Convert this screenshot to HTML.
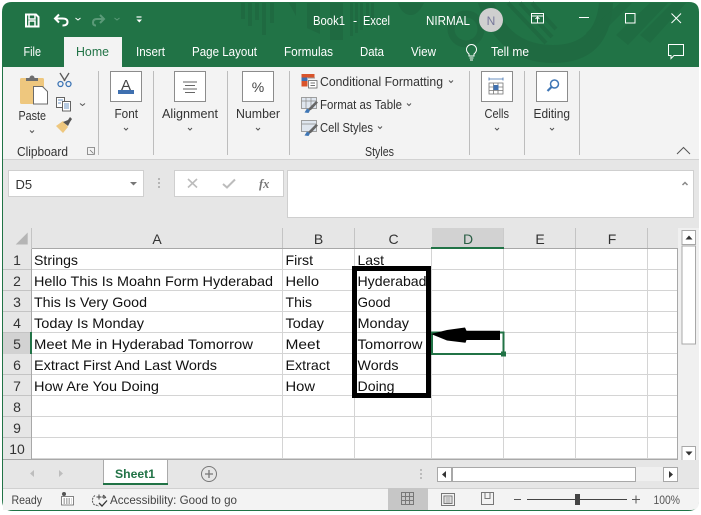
<!DOCTYPE html>
<html><head><meta charset="utf-8"><style>
html,body{margin:0;padding:0;background:#fff;width:701px;height:515px;overflow:hidden}
svg{display:block}
text{font-family:"Liberation Sans",sans-serif;white-space:pre}
.c{font-size:14px;fill:#111}
.r{font-size:12.5px;fill:#333}
.t{font-size:12.5px;fill:#fff}
.h{font-size:14px;fill:#333;text-anchor:middle}
</style></head><body>
<svg width="701" height="515" viewBox="0 0 701 515" xmlns="http://www.w3.org/2000/svg">
<rect width="701" height="515" fill="#fff"/>
<path d="M2 12Q2 2 12 2H689Q699 2 699 12V500Q699 511 688 511H13Q2 511 2 500Z" fill="#217346"/>
<!-- title pattern -->
<g fill="#1f6a41">
<rect x="241" y="3" width="4" height="16"/><rect x="248" y="3" width="4" height="23"/><rect x="255" y="3" width="4" height="17"/><rect x="262" y="3" width="4" height="32"/><rect x="270" y="3" width="4" height="20"/>
<path d="M289 3H296V16Z"/><path d="M307 3H320V34L307 28Z"/><path d="M330 3H343V40H330Z"/>
<rect x="350" y="3" width="3" height="33"/><rect x="355" y="3" width="3" height="30"/><rect x="360" y="3" width="3" height="27"/><rect x="366" y="3" width="3" height="24"/><rect x="371" y="3" width="3" height="21"/>
<path d="M398 3H424Q418 15 411 15Q402 15 398 3Z"/>
<path d="M478 3L494 3Q510 45 553 45Q595 45 599 3L613 3Q610 63 553 63Q498 63 478 3Z"/>
<path d="M620 3h12l-38 38-8-8ZM650 3h18l-40 42-12-10ZM672 3h14l-36 40-10-8Z" opacity=".8"/>
</g>
<circle cx="466" cy="29" r="15" fill="none" stroke="#1f6a41" stroke-width="7"/>
<g stroke="#1f6a41" stroke-width="4" fill="none"><path d="M508 3l38 40M520 3l32 34M532 3l24 26"/></g>
<!-- QAT -->
<g fill="none" stroke="#fff" stroke-width="2">
<path d="M26 14.500H36L38.500 17V26.500H26Z"/><path d="M29 15v4h6v-4M29 26v-5h6v5" stroke-width="1.500"/>
<path d="M59 14.500L55 18.500L59 22.500M55 18.500H62.500Q67.500 18.500 67.500 22Q67.500 25.500 62.500 25.500" stroke-width="2"/>
<path d="M75.500 18l2.500 2 2.500-2" stroke-width="1"/>
<path d="M100 15L104 19L100 23M104 19H97Q93 19 93 22.500Q93 25.500 96 25.500" stroke="#5b9a78" stroke-width="2"/>
<path d="M114.500 18l2.500 2 2.500-2" stroke="#5b9a78" stroke-width="1"/>
<path d="M136.500 17h5" stroke-width="1.200"/>
</g>
<path d="M136.500 19.500h5.500l-2.700 3z" fill="#fff"/>
<!-- title text -->
<text x="313" y="25" class="t" textLength="32" lengthAdjust="spacingAndGlyphs">Book1</text>
<text x="353" y="25" class="t">-</text>
<text x="363" y="25" class="t" textLength="27" lengthAdjust="spacingAndGlyphs">Excel</text>
<text x="426" y="25" class="t" textLength="44" lengthAdjust="spacingAndGlyphs">NIRMAL</text>
<circle cx="491" cy="20" r="12" fill="#cfcfcf"/>
<text x="491" y="25" font-size="12" fill="#77779a" text-anchor="middle">N</text>
<!-- window buttons -->
<g fill="none" stroke="#fff" stroke-width="1">
<rect x="531.500" y="13.500" width="12" height="9.500"/><path d="M531.500 16h12M537.500 23v-5.500M535.500 19l2-2 2 2"/>
<path d="M579 17.500h10"/><rect x="625.500" y="13.500" width="9.500" height="9.500"/><path d="M671.500 13.500l9.500 9.500M681 13.500l-9.500 9.500"/>
</g>
<!-- tabs -->
<rect x="64" y="37" width="58" height="31" fill="#f3f3f3"/>
<text x="23.500" y="56" class="t" textLength="17.500" lengthAdjust="spacingAndGlyphs">File</text>
<text x="76" y="56" style="font-size:12.500px;fill:#217346" textLength="33" lengthAdjust="spacingAndGlyphs">Home</text>
<text x="136" y="56" class="t" textLength="29" lengthAdjust="spacingAndGlyphs">Insert</text>
<text x="192" y="56" class="t" textLength="65" lengthAdjust="spacingAndGlyphs">Page Layout</text>
<text x="284" y="56" class="t" textLength="49" lengthAdjust="spacingAndGlyphs">Formulas</text>
<text x="360" y="56" class="t" textLength="24" lengthAdjust="spacingAndGlyphs">Data</text>
<text x="411" y="56" class="t" textLength="25" lengthAdjust="spacingAndGlyphs">View</text>
<text x="491" y="56" class="t" textLength="38" lengthAdjust="spacingAndGlyphs">Tell me</text>
<g fill="none" stroke="#fff" stroke-width="1"><path d="M469 56V54Q466.500 52 466.500 49.500A5 5 0 0 1 476.500 49.500Q476.500 52 474 54V56ZM469.500 58h4M470 60h3"/>
<path d="M668.500 44.500h15v11h-9.500l-3 3v-3h-2.500Z"/></g>
<!-- ribbon -->
<rect x="3" y="67" width="696" height="92" fill="#f3f3f3"/>
<rect x="3" y="159" width="696" height="1.500" fill="#d2d2d2"/>
<rect x="3" y="160" width="696" height="68" fill="#e6e6e6"/>
<g fill="#bdbdbd"><rect x="98" y="71" width="1" height="84"/><rect x="153" y="71" width="1" height="84"/><rect x="227" y="71" width="1" height="84"/><rect x="289" y="71" width="1" height="84"/><rect x="469" y="71" width="1" height="84"/><rect x="524" y="71" width="1" height="84"/><rect x="579" y="71" width="1" height="84"/></g>
<!-- paste -->
<rect x="20" y="78" width="24" height="26" rx="1.500" fill="#eec77e"/>
<path d="M26 81v-3h3.500a2.500 2.500 0 0 1 5 0H38v3Z" fill="#6e6e6e"/>
<path d="M33.500 86.500h9l5 5v12.500h-14Z" fill="#fff" stroke="#6b6b6b" stroke-width="1"/>
<g fill="none" stroke="#5a5a5a" stroke-width="1.300"><path d="M60 73l5 8M69 73l-5 8"/></g>
<g fill="none" stroke="#3f76b5" stroke-width="1.300"><circle cx="60.500" cy="84" r="2.500"/><circle cx="68.500" cy="84" r="2.500"/></g>
<g fill="#fff" stroke="#555" stroke-width=".9"><rect x="56.500" y="97.500" width="8" height="10"/><rect x="62.500" y="101.500" width="8" height="9.500"/></g>
<path d="M58 100h5M58 103h3M64 104h5M64 106h5M64 108h5" stroke="#3f76b5" stroke-width=".8"/>
<path d="M56 126l7-5 5 6-5 6Z" fill="#eec77e"/><path d="M63 122l5-2 2-3 2 2-2 3-2 4Z" fill="#555"/>
<text x="18.500" y="120" class="r" textLength="27.500" lengthAdjust="spacingAndGlyphs">Paste</text>
<text x="17" y="156" class="r" textLength="51" lengthAdjust="spacingAndGlyphs">Clipboard</text>
<path d="M87.500 147.500h7v7M87.500 147.500v7h7M90 150l3.500 3.500" fill="none" stroke="#777" stroke-width=".8"/>
<!-- chevrons -->
<g fill="none" stroke="#555" stroke-width="1">
<path d="M30 130.500l2 2 2-2M80 103.500l2.500 2 2.500-2M124 128l2 2 2-2M188 128l2 2 2-2M256 128l2 2 2-2M495 128l2 2 2-2M550 128l2 2 2-2M449 80.500l2 2 2-2M407 103.500l2 2 2-2M378 126.500l2 2 2-2"/>
<path d="M677 154l6.500-6.500 6.500 6.500"/>
</g>
<!-- boxes -->
<g fill="#fff" stroke="#8c8c8c" stroke-width="1"><rect x="110.500" y="71.500" width="31" height="30"/><rect x="174.500" y="71.500" width="31" height="30"/><rect x="242.500" y="71.500" width="31" height="30"/><rect x="481.500" y="71.500" width="31" height="30"/><rect x="536.500" y="71.500" width="31" height="30"/></g>
<text x="126" y="90" font-size="15" fill="#444" text-anchor="middle">A</text>
<rect x="118" y="90" width="16" height="4" fill="#3f70b0"/>
<path d="M183 82h14M185 85.500h10M183 89h14M185 92.500h10" stroke="#666" stroke-width="1"/>
<text x="258" y="92" font-size="14" fill="#444" text-anchor="middle">%</text>
<g fill="none" stroke="#777" stroke-width=".8"><rect x="489" y="83" width="14" height="11"/><path d="M489 87h14M489 90.500h14M493.500 83v11M498 83v11"/><path d="M489 79h14M489 77.500v3M503 77.500v3" stroke="#3f70b0"/></g>
<rect x="493.500" y="85" width="5" height="5" fill="#3f70b0"/>
<circle cx="554.500" cy="84" r="4" fill="#fff" stroke="#3f76b5" stroke-width="1.500"/><path d="M551.500 87l-4 4" stroke="#3f76b5" stroke-width="2.200"/>
<text x="114.500" y="118" class="r" textLength="23.500" lengthAdjust="spacingAndGlyphs">Font</text>
<text x="162" y="118" class="r" textLength="56" lengthAdjust="spacingAndGlyphs">Alignment</text>
<text x="236" y="118" class="r" textLength="44" lengthAdjust="spacingAndGlyphs">Number</text>
<text x="484.500" y="118" class="r" textLength="24.500" lengthAdjust="spacingAndGlyphs">Cells</text>
<text x="533.500" y="118" class="r" textLength="36.500" lengthAdjust="spacingAndGlyphs">Editing</text>
<text x="320" y="86" class="r" textLength="123" lengthAdjust="spacingAndGlyphs">Conditional Formatting</text>
<text x="320" y="109" class="r" textLength="82" lengthAdjust="spacingAndGlyphs">Format as Table</text>
<text x="320" y="132" class="r" textLength="53" lengthAdjust="spacingAndGlyphs">Cell Styles</text>
<text x="365" y="156" class="r" textLength="29" lengthAdjust="spacingAndGlyphs">Styles</text>
<!-- style icons -->
<rect x="301.500" y="74" width="13" height="3.500" fill="#d9542b"/><rect x="301.500" y="77.500" width="6" height="3.500" fill="#3f70b0"/><rect x="301.500" y="81" width="6" height="5.500" fill="#d9542b"/>
<path d="M308 78h7M308 81h3" stroke="#999" stroke-width="1"/>
<rect x="308.500" y="80.500" width="8.500" height="7.500" fill="#fff" stroke="#666" stroke-width=".8"/><path d="M310.500 83h4.500M310.500 85.500h4.500" stroke="#444" stroke-width=".8"/>
<g fill="#dfe6ef" stroke="#8a8a8a" stroke-width=".8"><rect x="301.500" y="97.500" width="15" height="11"/><rect x="301.500" y="120.500" width="15" height="11"/></g>
<path d="M301.500 101h15M306 97.500v11M311 97.500v11M301.500 124h15" stroke="#8a8a8a" stroke-width=".7"/>
<path d="M307 111l2-3 7-7 2 1.500-7 7.500ZM307 134l2-3 7-7 2 1.500-7 7.500Z" fill="#666"/><path d="M304.500 112.500l2.500-4 3 2-1.500 2.500ZM304.500 135.500l2.500-4 3 2-1.500 2.500Z" fill="#3f76b5"/>
<!-- formula bar -->
<rect x="8.500" y="170.500" width="135" height="26" fill="#fff" stroke="#cfcfcf"/>
<text x="15.500" y="189" font-size="13" fill="#333">D5</text>
<path d="M130 182h7l-3.500 3.500Z" fill="#777"/>
<g fill="#b5b5b5"><rect x="158" y="178" width="2" height="2"/><rect x="158" y="182" width="2" height="2"/><rect x="158" y="186" width="2" height="2"/></g>
<rect x="174.500" y="170.500" width="109" height="26" fill="#fff" stroke="#cfcfcf"/>
<path d="M188 179l9 8.500M197 179l-9 8.500" stroke="#bcbcbc" stroke-width="1.600" fill="none"/>
<path d="M223 184l4 3.500 8-8" stroke="#bcbcbc" stroke-width="2" fill="none"/>
<text x="259" y="188" font-size="12.500" font-style="italic" font-weight="bold" fill="#777" style="font-family:'Liberation Serif',serif">fx</text>
<rect x="287.500" y="170.500" width="406" height="47" fill="#fff" stroke="#cfcfcf"/>
<path d="M682.500 185l2.500-2.500 2.500 2.500" stroke="#888" stroke-width="1.500" fill="none"/>
<!-- grid -->
<rect x="3" y="228" width="696" height="232" fill="#e6e6e6"/>
<rect x="32" y="249" width="645" height="211" fill="#fff"/>
<g stroke="#d4d4d4" stroke-width="1">
<path d="M32 269.500H677M32 290.500H677M32 311.500H677M32 332.500H677M32 353.500H677M32 374.500H677M32 395.500H677M32 416.500H677M32 437.500H677M32 458.500H677"/>
<path d="M282.500 249V460M354.500 249V460M431.500 249V460M503.500 249V460M575.500 249V460M647.500 249V460"/>
</g>
<path d="M677.500 248.500V460M31.500 248.500V460M32 248.500H432M504 248.500H678M3 459.500H678" stroke="#a8a8a8" stroke-width="1" fill="none"/>
<g stroke="#c4c4c4" stroke-width="1"><path d="M3 269.500H31M3 290.500H31M3 311.500H31M3 332.500H31M3 353.500H31M3 374.500H31M3 395.500H31M3 416.500H31M3 437.500H31"/><path d="M31.500 228V248M282.500 228V248M354.500 228V248M503.500 228V248M575.500 228V248M647.500 228V248"/></g>
<rect x="432" y="228" width="71.500" height="19" fill="#d2d2d2"/><rect x="431" y="247" width="73" height="2" fill="#217346"/>
<rect x="3" y="333" width="28" height="21" fill="#d2d2d2"/><rect x="30" y="332" width="2" height="22" fill="#217346"/>
<path d="M15.700 244.500H27.700V232.500Z" fill="#b5b5b5"/>
<text x="157" y="244" class="h">A</text><text x="318.500" y="244" class="h">B</text><text x="393.500" y="244" class="h">C</text><text x="468" y="244" class="h" style="fill:#2a5f45">D</text><text x="540" y="244" class="h">E</text><text x="612" y="244" class="h">F</text>
<text x="17" y="265" class="h">1</text><text x="17" y="286" class="h">2</text><text x="17" y="307" class="h">3</text><text x="17" y="328" class="h">4</text><text x="17" y="349" class="h">5</text><text x="17" y="370" class="h">6</text><text x="17" y="391" class="h">7</text><text x="17" y="412" class="h">8</text><text x="17" y="433" class="h">9</text><text x="17" y="454" class="h">10</text>
<!-- cells -->
<text x="34" y="265" class="c" textLength="44" lengthAdjust="spacingAndGlyphs">Strings</text>
<text x="34" y="286" class="c" textLength="239" lengthAdjust="spacingAndGlyphs">Hello This Is Moahn Form Hyderabad</text>
<text x="34" y="307" class="c" textLength="113" lengthAdjust="spacingAndGlyphs">This Is Very Good</text>
<text x="34" y="328" class="c" textLength="110" lengthAdjust="spacingAndGlyphs">Today Is Monday</text>
<text x="34" y="349" class="c" textLength="219" lengthAdjust="spacingAndGlyphs">Meet Me in Hyderabad Tomorrow</text>
<text x="34" y="370" class="c" textLength="183" lengthAdjust="spacingAndGlyphs">Extract First And Last Words</text>
<text x="34" y="391" class="c" textLength="125" lengthAdjust="spacingAndGlyphs">How Are You Doing</text>
<text x="285.500" y="265" class="c" textLength="27.500" lengthAdjust="spacingAndGlyphs">First</text>
<text x="285.500" y="286" class="c" textLength="33.500" lengthAdjust="spacingAndGlyphs">Hello</text>
<text x="285.500" y="307" class="c" textLength="26.500" lengthAdjust="spacingAndGlyphs">This</text>
<text x="285.500" y="328" class="c" textLength="38.500" lengthAdjust="spacingAndGlyphs">Today</text>
<text x="285.500" y="349" class="c" textLength="34.500" lengthAdjust="spacingAndGlyphs">Meet</text>
<text x="285.500" y="370" class="c" textLength="44.500" lengthAdjust="spacingAndGlyphs">Extract</text>
<text x="285.500" y="391" class="c" textLength="29.500" lengthAdjust="spacingAndGlyphs">How</text>
<text x="357.500" y="265" class="c" textLength="26.500" lengthAdjust="spacingAndGlyphs">Last</text>
<text x="357.500" y="286" class="c" textLength="69" lengthAdjust="spacingAndGlyphs">Hyderabad</text>
<text x="357.500" y="307" class="c" textLength="33" lengthAdjust="spacingAndGlyphs">Good</text>
<text x="357.500" y="328" class="c" textLength="51.500" lengthAdjust="spacingAndGlyphs">Monday</text>
<text x="357.500" y="349" class="c" textLength="65" lengthAdjust="spacingAndGlyphs">Tomorrow</text>
<text x="357.500" y="370" class="c" textLength="41" lengthAdjust="spacingAndGlyphs">Words</text>
<text x="357.500" y="391" class="c" textLength="37" lengthAdjust="spacingAndGlyphs">Doing</text>
<!-- selection -->
<rect x="432" y="332.500" width="71.500" height="21.500" fill="none" stroke="#217346" stroke-width="2"/>
<rect x="501" y="351.500" width="5" height="5" fill="#217346"/>
<!-- annotations -->
<rect x="354.500" y="268.500" width="74" height="127" fill="none" stroke="#000" stroke-width="5"/>
<path d="M431 334L447 330L465 327.500L466.500 330.700H500V340H466.500L465.500 342.700L447 340.500Z" fill="#000"/>
<!-- scrollbar -->
<rect x="678" y="228" width="21" height="232" fill="#f0f0f0"/>
<rect x="682" y="230.500" width="13.500" height="14" fill="#fff" stroke="#a8a8a8"/>
<rect x="682" y="246" width="13.500" height="98" fill="#fff" stroke="#a8a8a8"/>
<rect x="682" y="446.500" width="13.500" height="14" fill="#fff" stroke="#a8a8a8"/>
<path d="M685.500 239.500h7l-3.500-4Z" fill="#333"/><path d="M685.500 451.500h7l-3.500 4Z" fill="#333"/>
<!-- sheet tabs -->
<rect x="3" y="460" width="696" height="28" fill="#e6e6e6"/>
<path d="M34 470v7l-4-3.500ZM59 470v7l4-3.500Z" fill="#bdbdbd"/>
<rect x="103" y="460" width="64" height="24" fill="#fff"/><path d="M103.500 460v24M167.500 460v24" stroke="#aaa"/>
<rect x="103" y="483" width="65" height="2" fill="#217346"/>
<text x="115" y="478" font-size="12" font-weight="bold" fill="#217346" textLength="40" lengthAdjust="spacingAndGlyphs">Sheet1</text>
<circle cx="209" cy="474" r="7.500" fill="none" stroke="#777" stroke-width="1"/><path d="M205 474h8M209 470v8" stroke="#777" stroke-width="1.300"/>
<g fill="#bcbcbc"><rect x="420" y="469" width="2" height="2"/><rect x="420" y="473" width="2" height="2"/><rect x="420" y="477" width="2" height="2"/></g>
<rect x="452" y="467" width="211" height="14" fill="#f0f0f0"/>
<rect x="437.500" y="467.500" width="14" height="14" fill="#fff" stroke="#a8a8a8"/>
<rect x="452.500" y="467.500" width="183" height="14" fill="#fff" stroke="#a8a8a8"/>
<rect x="663.500" y="467.500" width="14" height="14" fill="#fff" stroke="#a8a8a8"/>
<path d="M446 471v7l-4-3.500ZM669 471v7l4-3.500Z" fill="#333"/>
<!-- status bar -->
<path d="M3 488H699V502Q699 510 691 510H3Z" fill="#f3f3f3"/>
<rect x="3" y="488" width="696" height="1" fill="#d0d0d0"/>
<text x="11.500" y="504" font-size="12" fill="#444" textLength="30.500" lengthAdjust="spacingAndGlyphs">Ready</text>
<rect x="61.500" y="496.500" width="12" height="8.500" fill="#fff" stroke="#666" stroke-width=".8"/><circle cx="64" cy="494" r="2" fill="#555"/><path d="M63.500 499h8M63.500 501h8M63.500 503h8" stroke="#666" stroke-width=".9" stroke-dasharray="1.500 1"/>
<path d="M95 495.500a6 6 0 0 0-1 9l5 1.500M103 495l3 3" fill="none" stroke="#555" stroke-width="1" stroke-dasharray="2 1"/><path d="M99 494.500v5M96.500 497h5M104 495v4M102 497h4" stroke="#444" stroke-width="1"/><path d="M99 503l3 3 5-5.500" fill="none" stroke="#333" stroke-width="1.300"/>
<text x="110" y="504" font-size="12" fill="#444" textLength="127" lengthAdjust="spacingAndGlyphs">Accessibility: Good to go</text>
<rect x="388" y="488" width="40" height="22" fill="#c6c6c6"/>
<g fill="none" stroke="#777" stroke-width="1">
<rect x="401.500" y="492.500" width="12" height="12"/><path d="M401.500 496.500h12M401.500 500.500h12M405.500 492.500v12M409.500 492.500v12"/>
<rect x="441.500" y="493.500" width="13" height="12"/><rect x="444" y="496" width="8" height="7.500"/><path d="M445.500 498h5M445.500 500h5M445.500 502h5" stroke-width=".8"/>
<path d="M481.500 504.500v-12h12v12ZM485 492.500v6h5v-6" />
</g>
<path d="M514 499.500h7M632 499.500h8M636 495.500v8" stroke="#555" stroke-width="1"/>
<rect x="527" y="499" width="100" height="1" fill="#444"/>
<rect x="575" y="494" width="5" height="11" fill="#444"/>
<text x="653.500" y="504" font-size="12" fill="#555" textLength="26.500" lengthAdjust="spacingAndGlyphs">100%</text>
</svg>
</body></html>
